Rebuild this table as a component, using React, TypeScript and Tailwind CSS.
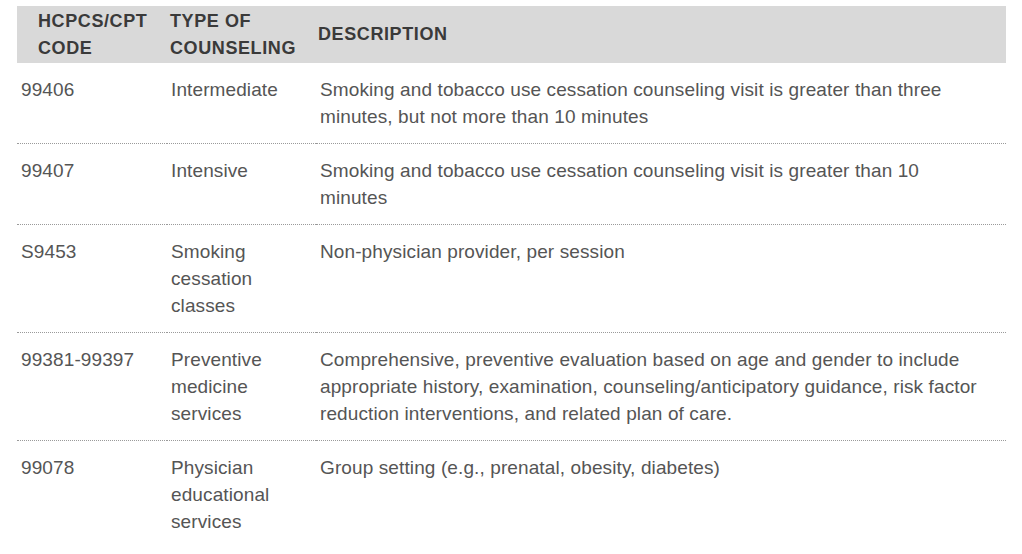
import React from "react";

const rows = [
  {
    code: "99406",
    type: "Intermediate",
    desc: "Smoking and tobacco use cessation counseling visit is greater than three minutes, but not more than 10 minutes",
  },
  {
    code: "99407",
    type: "Intensive",
    desc: "Smoking and tobacco use cessation counseling visit is greater than 10 minutes",
  },
  {
    code: "S9453",
    type: "Smoking cessation classes",
    desc: "Non-physician provider, per session",
  },
  {
    code: "99381-99397",
    type: "Preventive medicine services",
    desc: "Comprehensive, preventive evaluation based on age and gender to include appropriate history, examination, counseling/anticipatory guidance, risk factor reduction interventions, and related plan of care.",
  },
  {
    code: "99078",
    type: "Physician educational services",
    desc: "Group setting (e.g., prenatal, obesity, diabetes)",
  },
];

export default function App() {
  return (
    <div className="min-h-[554px] w-full bg-white pl-[17px] pt-[6px]">
      <table className="w-[989px] table-fixed border-collapse font-['Liberation_Sans',Arial,sans-serif]">
        <colgroup>
          <col className="w-[150px]" />
          <col className="w-[149px]" />
          <col className="w-[690px]" />
        </colgroup>
        <thead>
          <tr className="bg-[#d9d9d9] text-left text-[18px] font-bold uppercase leading-[27px] tracking-[0.6px] text-[#3a3a3a]">
            <th className="h-[57px] pl-[21px] pr-[4px] align-middle">HCPCS/CPT CODE</th>
            <th className="h-[57px] pl-[3px] pr-[4px] align-middle">Type of Counseling</th>
            <th className="h-[57px] pl-[2px] pr-[4px] align-middle">Description</th>
          </tr>
        </thead>
        <tbody className="text-[19px] leading-[27px] tracking-[0.11px] text-[#555555]">
          {rows.map((r, i) => {
            const last = i === rows.length - 1;
            const b = last ? "" : "border-b border-dotted border-[#9a9a9a]";
            return (
              <tr key={r.code}>
                <td className={`pl-[4px] pr-[4px] pt-[13px] pb-[13px] align-top ${b}`}>{r.code}</td>
                <td className={`pl-[4px] pr-[4px] pt-[13px] pb-[13px] align-top ${b}`}>{r.type}</td>
                <td className={`pl-[4px] pr-[27px] pt-[13px] pb-[13px] align-top ${b}`}>{r.desc}</td>
              </tr>
            );
          })}
        </tbody>
      </table>
    </div>
  );
}
